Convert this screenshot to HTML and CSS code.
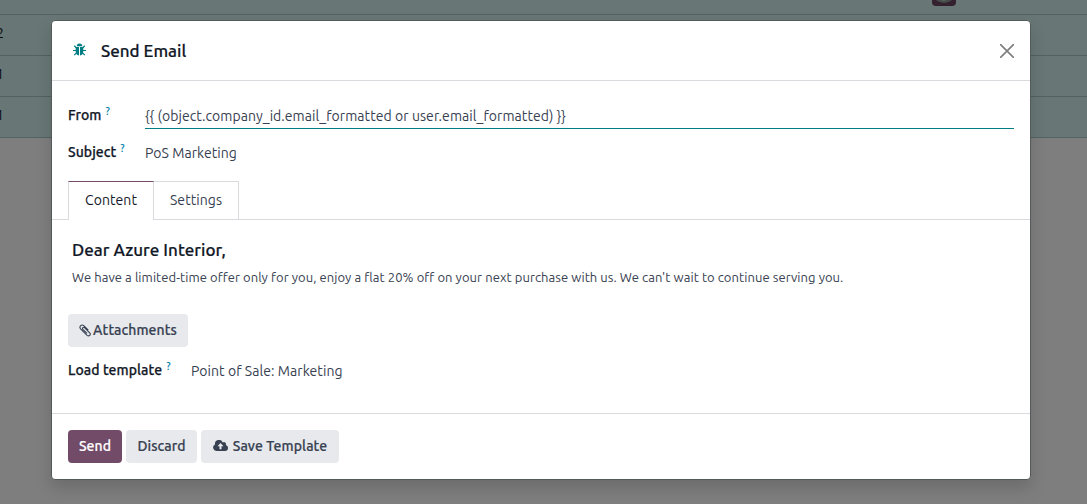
FILE: index.html
```html
<!DOCTYPE html>
<html lang="en">
<head>
<meta charset="utf-8">
<title>Send Email</title>
<link rel="stylesheet" href="styles.css">
</head>
<body>
<div class="list">
  <div class="row row-first"><svg class="avatar" width="24" height="24" viewBox="0 0 24 24"><rect width="24" height="24" rx="4" fill="#35202f"/><path d="M4 0V17Q4 20 12 21Q20 20 20 17V0Z" fill="#454b48"/><path d="M7 17Q12 21 18 16V0H7Z" fill="#646b67"/></svg></div>
  <div class="row"><span class="digit">2</span></div>
  <div class="row"><span class="digit one">1</span></div>
  <div class="row"><span class="digit one">1</span></div>
</div>
<main class="modal">
  <header class="head">
    <svg class="bug" width="13" height="14" viewBox="0 0 13 14"><path d="M3.700 3.200Q3.800.6 6.500.6T9.300 3.200Z" fill="#017e84"/><path d="M2.700 4H6V12.500Q2.700 12 2.700 8ZM7 4H10.300V8Q10.300 12 7 12.500Z" fill="#017e84"/><path d="M3.500 5 1.200 2.800M0 7.500H3.500M1.200 12.200 3.700 9.600M9.500 5 11.800 2.800M13 7.500H9.500M11.800 12.200 9.300 9.600" fill="none" stroke="#017e84" stroke-width="1.200"/></svg>
    <h1 class="title">Send Email</h1>
    <svg class="close" width="14" height="14" viewBox="0 0 14 14"><path d="M.5.5 13.500 13.500M13.500.5.5 13.500" stroke="#7f7f7f" stroke-width="1.700" stroke-linecap="round"/></svg>
  </header>
  <section class="fields">
    <label class="label"><span>From</span><sup>?</sup></label>
    <div class="value focused">{{ (object.company_id.email_formatted or user.email_formatted) }}</div>
    <label class="label"><span>Subject</span><sup>?</sup></label>
    <div class="value">PoS Marketing</div>
  </section>
  <nav class="tabs">
    <div class="tab active">Content</div>
    <div class="tab">Settings</div>
  </nav>
  <section class="content">
    <h2 class="greeting">Dear Azure Interior,</h2>
    <p class="message">We have a limited-time offer only for you, enjoy a flat 20% off on your next purchase with us. We can't wait to continue serving you.</p>
    <button class="btn attach"><svg class="clip" width="12" height="13" viewBox="0 0 12 13"><path d="M9.300 6.200 4.800 1.700C2.700-.2-.3 2.600 1.600 4.800L8.100 11.300C10 12.900 12.300 10.700 10.700 8.900L5.500 3.700C4.300 2.700 2.900 4.100 3.900 5.300L8 9.400" fill="none" stroke="#374151" stroke-width="1.100"/></svg><span>Attachments</span></button>
    <div class="template">
      <label class="label"><span>Load template</span><sup>?</sup></label>
      <div class="value">Point of Sale: Marketing</div>
    </div>
  </section>
  <footer class="foot">
    <button class="btn send">Send</button>
    <button class="btn discard">Discard</button>
    <button class="btn save"><svg class="cloud" width="15" height="12" viewBox="0 0 15 12"><path fill="#374151" fill-rule="evenodd" d="M15 8A3 3 0 0 1 12 11H3.500A3.500 3.500 0 0 1 2 4.400 4 4 0 0 1 9.700 2.500 2 2 0 0 1 12.800 4.900 3.100 3.100 0 0 1 15 8ZM7.500 3 4.500 6.200H6.500V9.200H8.500V6.200H10.500Z"/></svg><span>Save Template</span></button>
  </footer>
</main>
</body>
</html>
```
FILE: styles.css
```css
* { box-sizing: border-box; }
body { margin: 0; width: 1087px; height: 504px; overflow: hidden; background: #7d7e7d; font: 14px/21px "Ubuntu", "Noto Sans", sans-serif; color: #374151; letter-spacing: .065px; }
h1, h2, p { margin: 0; }
svg { display: block; flex: none; }
.row { height: 41px; background: #687776; border-bottom: 1px solid #526161; display: flex; align-items: center; color: #080b0d; }
.row-first { height: 15px; overflow: hidden; align-items: flex-start; }
.avatar { margin: -18px 0 0 932px; }
.digit { margin: -3px 0 0 -4px; }
.one { margin-left: -4px; }
.modal { position: absolute; left: 51px; top: 20px; width: 980px; height: 460px; background: #fff; border: 1px solid #535a59; border-radius: 4px; box-shadow: 0 8px 16px rgba(0,0,0,.15); display: flex; flex-direction: column; }
.head { height: 60px; flex: none; border-bottom: 1px solid #d8dadd; display: flex; align-items: center; padding: 0 16px 0 21px; }
.bug { margin-top: -2px; }
.title { margin-left: 15px; flex: 1; font-size: 17px; font-weight: 500; line-height: 24px; color: #111827; letter-spacing: 0; -webkit-text-stroke: .2px; }
.fields { height: 100px; flex: none; padding: 21px 16px 0; display: grid; grid-template-columns: 77px 1fr; grid-template-rows: 27px 27px; row-gap: 10px; }
.label { display: flex; gap: 4px; padding-top: 3px; font-weight: 500; color: #111827; white-space: nowrap; -webkit-text-stroke: .25px; }
.label sup { font-size: 10.500px; line-height: 12px; margin-top: 0; color: #0180a5; -webkit-text-stroke: 0; }
.value { padding-top: 4px; white-space: nowrap; }
.focused { border-bottom: 1px solid #017e84; }
.tabs { height: 39px; flex: none; display: flex; padding-left: 16px; border-bottom: 1px solid #d8dadd; }
.tab { width: 85px; height: 38px; border: 1px solid #d8dadd; border-width: 1px 1px 0 0; text-align: center; line-height: 36px; white-space: nowrap; }
.active { width: 86px; height: 39px; border-left-width: 1px; border-top-color: #714b67; background: #fff; color: #111827; }
.content { height: 193px; flex: none; padding: 18px 16px 0; }
.greeting { padding-left: 4px; font-size: 17px; line-height: 24px; font-weight: 500; color: #111827; letter-spacing: .03px; -webkit-text-stroke: .2px; }
.message { padding-left: 4px; margin-top: 5px; font-size: 13px; line-height: 20px; white-space: nowrap; letter-spacing: .069px; }
.btn { height: 33px; border: 0; border-radius: 4px; padding: 0 0 1px; font: 500 14px/21px "Ubuntu", "Noto Sans", sans-serif; letter-spacing: .08px; color: #374151; background: #e7e9ed; display: flex; align-items: center; justify-content: center; white-space: nowrap; -webkit-text-stroke: .2px; }
.attach { width: 120px; margin-top: 27px; gap: 2px; }
.template { margin-top: 10px; display: flex; }
.template .label { width: 123px; }
.foot { height: 66px; border-top: 1px solid #d8dadd; display: flex; align-items: center; gap: 4px; padding-left: 16px; }
.send { width: 54px; background: #714b67; color: #fff; }
.discard { width: 71px; }
.save { width: 138px; gap: 5px; }
```
